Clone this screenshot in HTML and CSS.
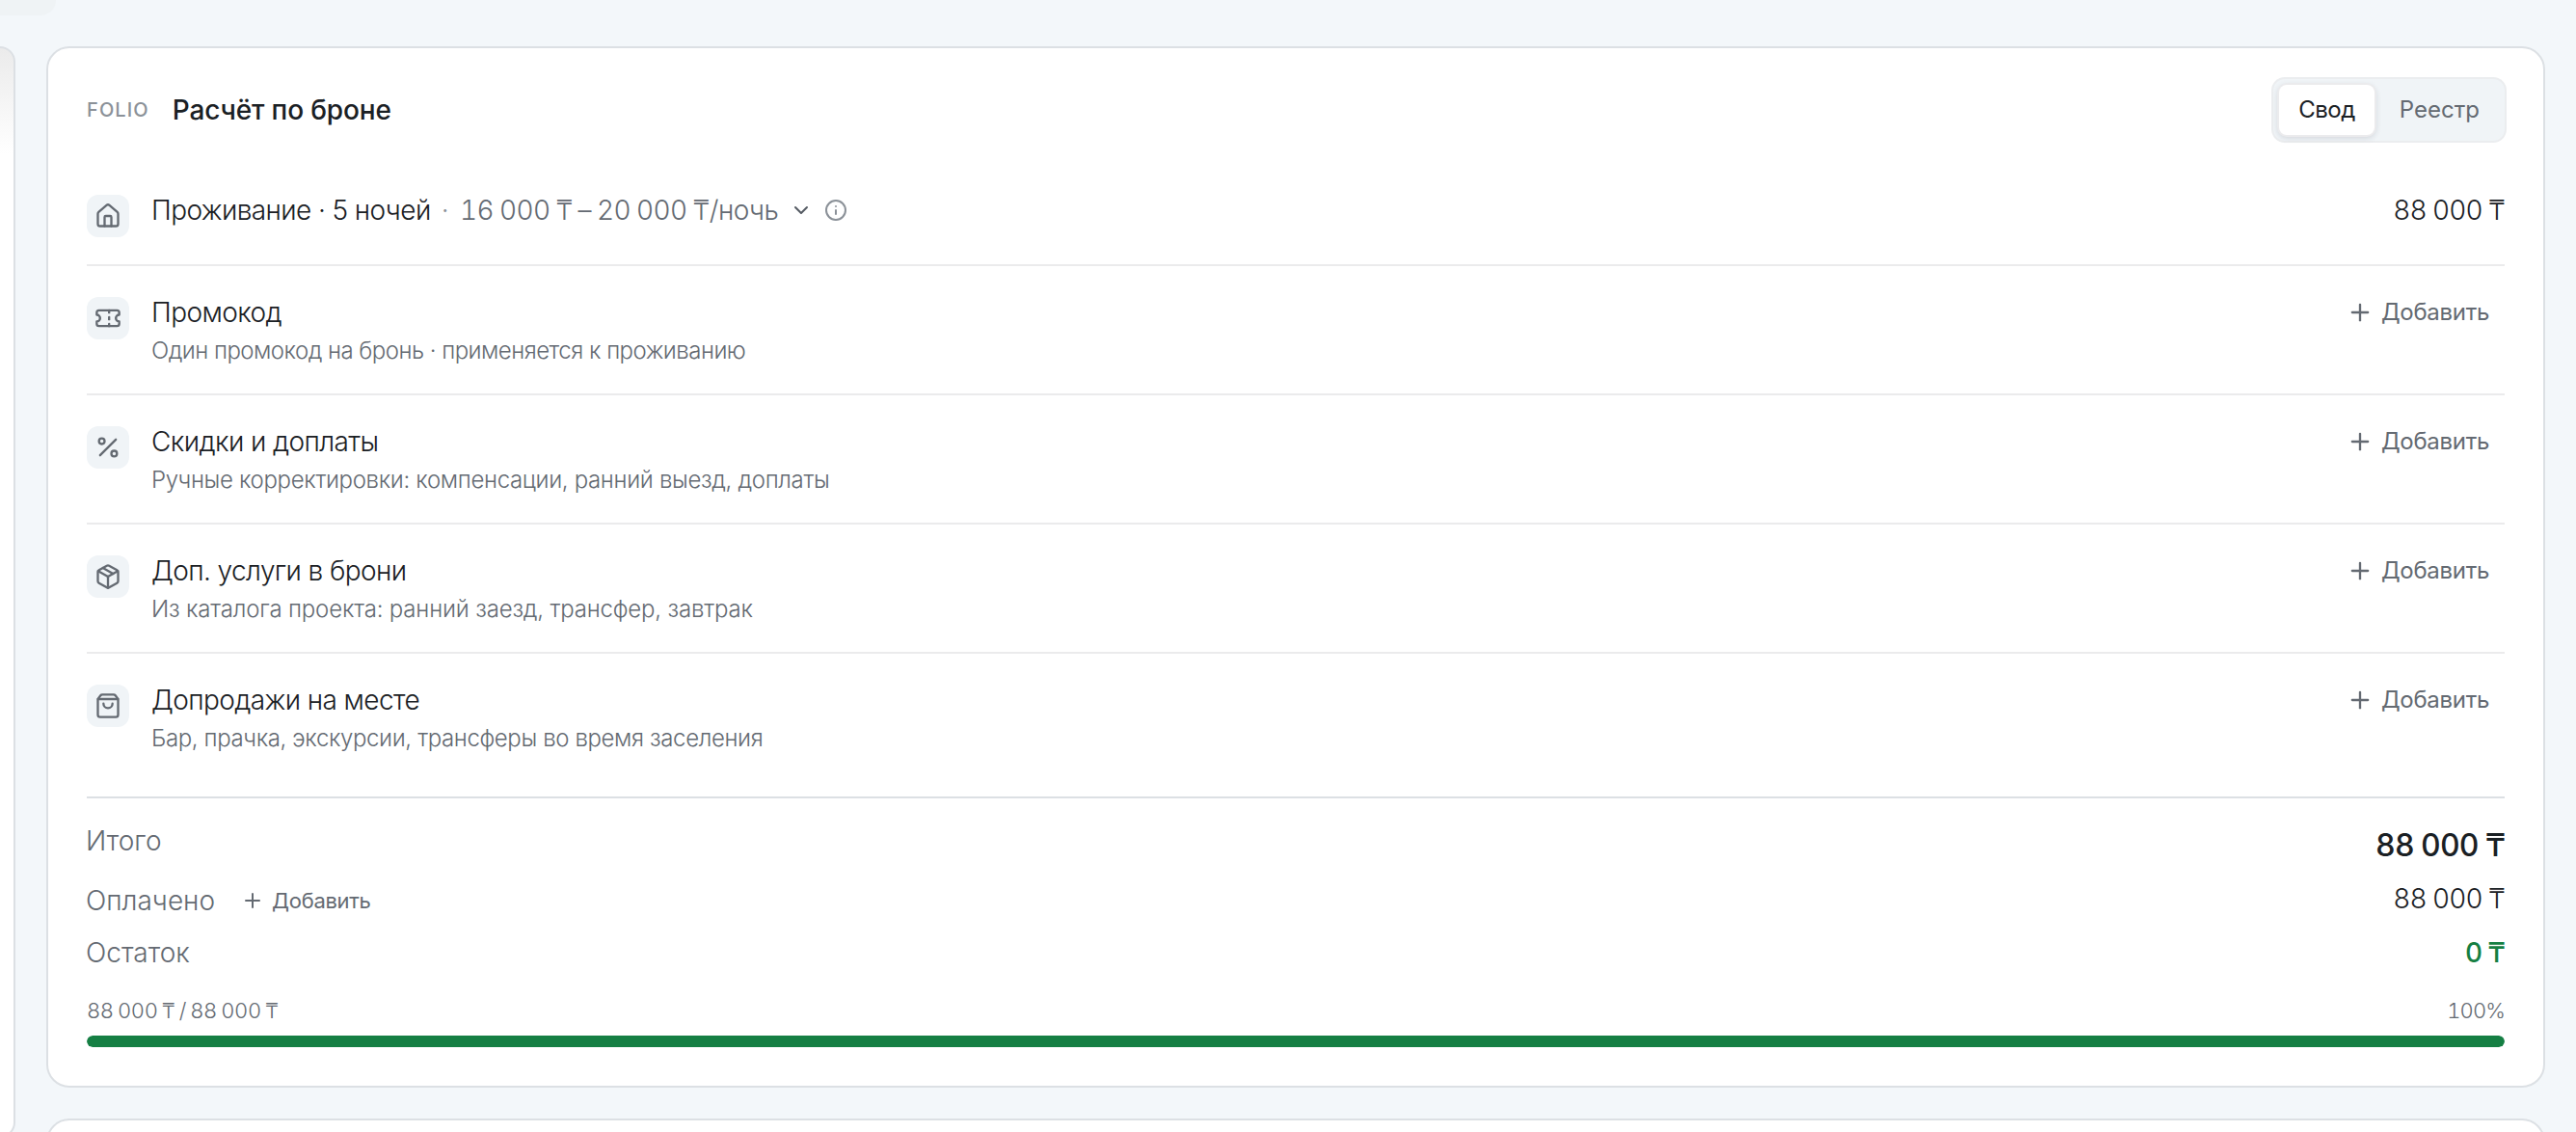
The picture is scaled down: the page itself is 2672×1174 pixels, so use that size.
FILE: index.html
```html
<!DOCTYPE html>
<html lang="ru">
<head>
  <meta charset="UTF-8" />
  <meta name="viewport" content="width=device-width, initial-scale=1.0"/>
  <title>Расчёт по броне</title>
  <link rel="stylesheet" href="styles.css">
</head>

<body>
  <div class="topbar"></div>

  <main class="layout">
    <aside class="side-card"></aside>

    <div class="content">
      <section class="card folio">
        <header class="folio-header">
          <span class="eyebrow">FOLIO</span>
          <h2>Расчёт по броне</h2>
          <div class="segmented">
            <button class="segment active">Свод</button>
            <button class="segment">Реестр</button>
          </div>
        </header>

        <div class="row row-stay">
          <div class="row-icon">
            <svg class="icon" viewBox="0 0 24 24"><path d="M15 21v-8a1 1 0 0 0-1-1h-4a1 1 0 0 0-1 1v8"/><path d="M3 10a2 2 0 0 1 .709-1.528l7-6a2 2 0 0 1 2.582 0l7 6A2 2 0 0 1 21 10v9a2 2 0 0 1-2 2H5a2 2 0 0 1-2-2z"/></svg>
          </div>
          <div class="row-text">
            <div class="row-title">
              <span>Проживание · 5 ночей</span>
              <span class="dot">·</span>
              <span class="rate">16 000 ₸ – 20 000 ₸/ночь</span>
              <svg class="icon icon-chevron" viewBox="0 0 24 24"><path d="m6 9 6 6 6-6"/></svg>
              <svg class="icon icon-info" viewBox="0 0 24 24"><circle cx="12" cy="12" r="10"/><path d="M12 16v-4"/><path d="M12 8h.01"/></svg>
            </div>
          </div>
          <div class="amount">88 000 ₸</div>
        </div>

        <div class="row row-promo">
          <div class="row-icon">
            <svg class="icon" viewBox="0 0 24 24"><path d="M2 9a3 3 0 0 1 0 6v2a2 2 0 0 0 2 2h16a2 2 0 0 0 2-2v-2a3 3 0 0 1 0-6V7a2 2 0 0 0-2-2H4a2 2 0 0 0-2 2Z"/><path d="M13 5v2"/><path d="M13 17v2"/><path d="M13 11v2"/></svg>
          </div>
          <div class="row-text">
            <div class="row-title">Промокод</div>
            <div class="row-sub">Один промокод на бронь · применяется к проживанию</div>
          </div>
          <button class="add-btn">
            <svg class="icon" viewBox="0 0 24 24"><path d="M5 12h14"/><path d="M12 5v14"/></svg>
            <span>Добавить</span>
          </button>
        </div>

        <div class="row row-discounts">
          <div class="row-icon">
            <svg class="icon" viewBox="0 0 24 24"><path d="M19 5 5 19"/><circle cx="6.5" cy="6.5" r="2.5"/><circle cx="17.5" cy="17.5" r="2.5"/></svg>
          </div>
          <div class="row-text">
            <div class="row-title">Скидки и доплаты</div>
            <div class="row-sub">Ручные корректировки: компенсации, ранний выезд, доплаты</div>
          </div>
          <button class="add-btn">
            <svg class="icon" viewBox="0 0 24 24"><path d="M5 12h14"/><path d="M12 5v14"/></svg>
            <span>Добавить</span>
          </button>
        </div>

        <div class="row row-services">
          <div class="row-icon">
            <svg class="icon" viewBox="0 0 24 24"><path d="M11 21.73a2 2 0 0 0 2 0l7-4A2 2 0 0 0 21 16V8a2 2 0 0 0-1-1.73l-7-4a2 2 0 0 0-2 0l-7 4A2 2 0 0 0 3 8v8a2 2 0 0 0 1 1.73z"/><path d="M12 22V12"/><path d="M3.29 7 12 12l8.71-5"/><path d="m7.5 4.27 9 5.15"/></svg>
          </div>
          <div class="row-text">
            <div class="row-title">Доп. услуги в брони</div>
            <div class="row-sub">Из каталога проекта: ранний заезд, трансфер, завтрак</div>
          </div>
          <button class="add-btn">
            <svg class="icon" viewBox="0 0 24 24"><path d="M5 12h14"/><path d="M12 5v14"/></svg>
            <span>Добавить</span>
          </button>
        </div>

        <div class="row row-upsell">
          <div class="row-icon">
            <svg class="icon" viewBox="0 0 24 24"><path d="M16 10a4 4 0 0 1-8 0"/><path d="M3.103 6.034h17.794"/><path d="M3.4 5.467a2 2 0 0 0-.4 1.2V20a2 2 0 0 0 2 2h14a2 2 0 0 0 2-2V6.667a2 2 0 0 0-.4-1.2l-2-2.667A2 2 0 0 0 17 2H7a2 2 0 0 0-1.6.8z"/></svg>
          </div>
          <div class="row-text">
            <div class="row-title">Допродажи на месте</div>
            <div class="row-sub">Бар, прачка, экскурсии, трансферы во время заселения</div>
          </div>
          <button class="add-btn">
            <svg class="icon" viewBox="0 0 24 24"><path d="M5 12h14"/><path d="M12 5v14"/></svg>
            <span>Добавить</span>
          </button>
        </div>

        <div class="totals">
          <div class="total-line total-sum">
            <span class="total-label">Итого</span>
            <span class="amount">88 000 ₸</span>
          </div>
          <div class="total-line total-paid">
            <span class="total-label">Оплачено</span>
            <button class="add-btn add-btn-small">
              <svg class="icon" viewBox="0 0 24 24"><path d="M5 12h14"/><path d="M12 5v14"/></svg>
              <span>Добавить</span>
            </button>
            <span class="amount">88 000 ₸</span>
          </div>
          <div class="total-line total-rest">
            <span class="total-label">Остаток</span>
            <span class="amount">0 ₸</span>
          </div>
        </div>

        <div class="progress">
          <div class="progress-labels">
            <span>88 000 ₸ / 88 000 ₸</span>
            <span class="percent">100%</span>
          </div>
          <div class="progress-track">
            <div class="progress-bar" style="width: 100%"></div>
          </div>
        </div>
      </section>

      <section class="card next-card"></section>
    </div>
  </main>
</body>
</html>
```
FILE: styles.css
```css
* {
  box-sizing: border-box;
}

body {
  margin: 0;
  height: 1174px;
  overflow: hidden;
  background-color: #f3f7fa;
  color: #1a2024;
  font-family: Inter, 'Noto Sans', sans-serif;
  font-size: 28px;
  font-weight: 350;
  line-height: 40px;
}

h2 {
  margin: 0;
}

button {
  border: none;
  background: none;
  font: inherit;
  color: inherit;
  cursor: pointer;
}

.icon {
  display: block;
  width: 28px;
  height: 28px;
  flex: none;
  fill: none;
  stroke: currentColor;
  stroke-width: 2;
  stroke-linecap: round;
  stroke-linejoin: round;
}

/* page frame */
.topbar {
  width: 58px;
  height: 16px;
  border-bottom-right-radius: 16px;
  background-color: #eff3f5;
}

.layout {
  display: flex;
  align-items: flex-start;
  gap: 32px;
  height: 1126px;
  margin-top: 32px;
  overflow: hidden;
}

.side-card {
  width: 16px;
  height: 1132px;
  border: 2px solid #dce0e4;
  border-left: none;
  border-radius: 0 24px 24px 0;
  background: linear-gradient(#ebebeb, #fff 110px);
}

.content {
  display: flex;
  flex-direction: column;
  gap: 32px;
  width: 2592px;
}

.card {
  border: 2px solid #dce0e4;
  border-radius: 24px;
  background-color: #fff;
}

.folio {
  height: 1080px;
  padding: 32px 40px 40px;
}

.next-card {
  height: 60px;
}

/* header */
.folio-header {
  display: flex;
  align-items: center;
  height: 64px;
  margin-bottom: 24px;
}

.eyebrow {
  margin-right: 24px;
  font-size: 20px;
  font-weight: 450;
  letter-spacing: 1.1px;
  color: #8b9198;
}

.folio-header h2 {
  font-size: 28px;
  font-weight: 540;
  letter-spacing: -0.15px;
}

.segmented {
  display: flex;
  gap: 6px;
  margin-left: auto;
  padding: 6px;
  border-radius: 12px;
  background-color: #f0f4f7;
  box-shadow: 0 0 0 2px #ebedef;
}

.segment {
  height: 52px;
  padding: 0 20px;
  border-radius: 8px;
  font-size: 24px;
  font-weight: 400;
  color: #646a72;
}

.segment.active {
  background-color: #fff;
  color: #1a2024;
  letter-spacing: -0.5px;
  box-shadow: 0 0 0 2px #ebebed, 0 2px 6px 1px rgba(20, 30, 50, 0.15);
}

/* rows */
.row {
  display: flex;
  align-items: flex-start;
  height: 134px;
  padding-top: 28px;
  border-bottom: 2px solid #ebebec;
}

.row-stay {
  height: 106px;
}

.row-upsell {
  height: 132px;
  border-bottom: none;
}

.row-icon {
  display: flex;
  align-items: center;
  justify-content: center;
  width: 44px;
  height: 44px;
  margin: 4px 24px 0 0;
  border-radius: 12px;
  background-color: #f0f4f7;
  color: #646a72;
}

.row-text {
  flex: 1;
  margin-left: -1px;
}

.row-title {
  display: flex;
  align-items: center;
  letter-spacing: -0.6px;
}

.row-sub {
  margin-top: 3px;
  font-size: 24px;
  line-height: 34px;
  color: #646a72;
}

.row-promo .row-sub {
  letter-spacing: -0.53px;
}

.row-discounts .row-sub {
  letter-spacing: -0.34px;
}

.row-services .row-sub {
  letter-spacing: -0.18px;
}

.row-upsell .row-sub {
  letter-spacing: -0.38px;
}

.dot {
  margin: 0 12px 0 11px;
  color: #8b9198;
}

.rate {
  color: #646a72;
  letter-spacing: -0.55px;
  word-spacing: -1.1px;
  font-variant-numeric: tabular-nums;
}

.icon-chevron,
.icon-info {
  width: 24px;
  height: 24px;
  margin-left: 12px;
}

.icon-chevron {
  color: #555b63;
}

.icon-info {
  color: #8b9198;
}

.amount {
  margin-left: auto;
  white-space: nowrap;
  letter-spacing: -0.75px;
  word-spacing: -0.8px;
  font-variant-numeric: tabular-nums;
}

.add-btn {
  display: flex;
  align-items: center;
  gap: 8px;
  height: 40px;
  padding: 0 16px;
  font-size: 24px;
  font-weight: 400;
  letter-spacing: -0.3px;
  color: #646a72;
}

.add-btn-small {
  height: 44px;
  margin-left: 11px;
  font-size: 22px;
}

.add-btn-small .icon {
  width: 24px;
  height: 24px;
}

/* totals */
.totals {
  display: flex;
  flex-direction: column;
  gap: 12px;
  margin-top: 16px;
  padding-top: 24px;
  border-top: 2px solid #dce0e4;
}

.total-line {
  display: flex;
  align-items: flex-start;
}

.total-label {
  margin-left: -1px;
  color: #646a72;
}

.total-sum .amount {
  height: 48px;
  font-size: 32px;
  font-weight: 550;
  line-height: 50px;
  letter-spacing: -0.9px;
  word-spacing: -0.3px;
}

.total-paid .total-label {
  line-height: 44px;
}

.total-rest .amount {
  font-weight: 550;
  color: #157f43;
}

/* progress */
.progress {
  margin-top: 24px;
}

.progress-labels {
  display: flex;
  justify-content: space-between;
  font-size: 22px;
  line-height: 32px;
  letter-spacing: -0.4px;
  word-spacing: -1.2px;
  color: #646a72;
  font-variant-numeric: tabular-nums;
}

.percent {
  letter-spacing: -0.9px;
}

.progress-track {
  margin-top: 10px;
  height: 12px;
  border-radius: 6px;
  background-color: #f0f4f7;
  overflow: hidden;
}

.progress-bar {
  height: 100%;
  border-radius: 6px;
  background-color: #157f43;
}
```
